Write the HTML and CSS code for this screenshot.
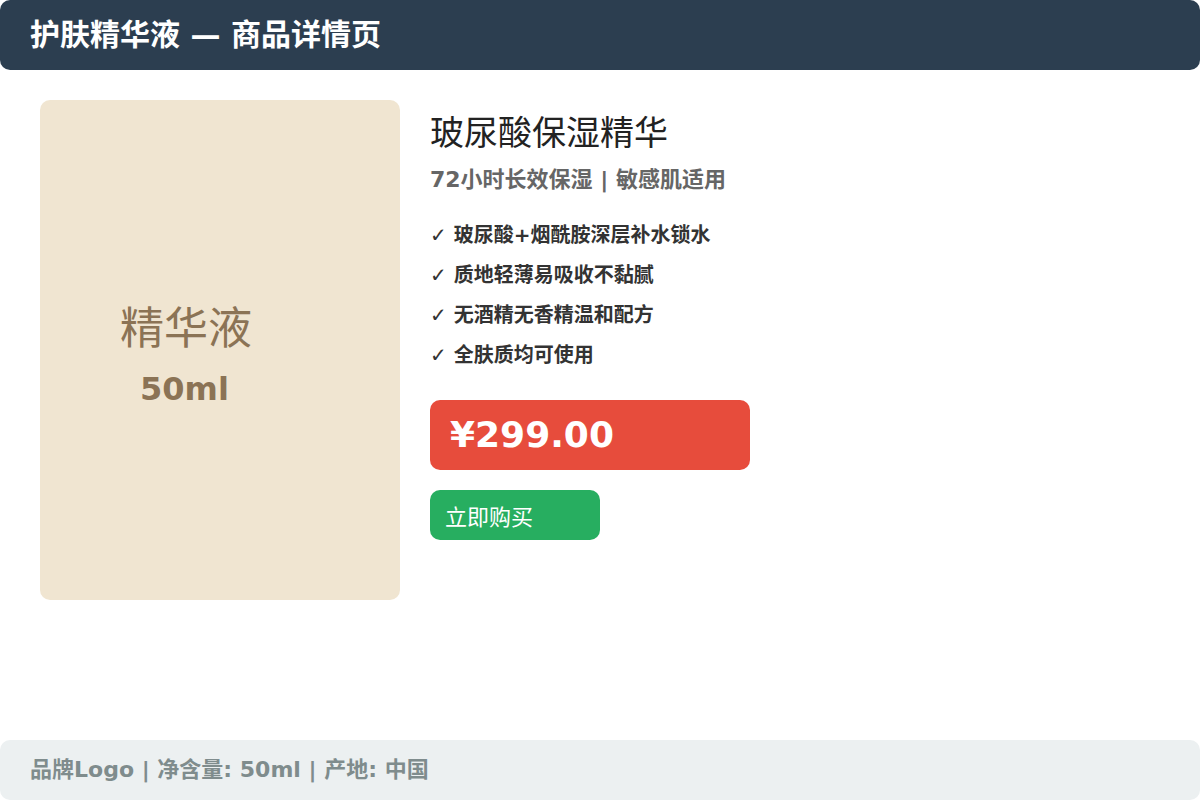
FILE: index.html
```html
<!DOCTYPE html>
<html lang="zh-CN">
<head>
  <meta charset="UTF-8">
  <title>护肤精华液 — 商品详情页</title>
  <link rel="stylesheet" href="styles.css">
</head>
<body>

  <div class="page">
    <div class="header">护肤精华液 — 商品详情页</div>

    <div class="main">
      <div class="product-image">
        <div class="image-label">精华液</div>
        <div class="image-size">50ml</div>
      </div>

      <div class="info">
        <h2>玻尿酸保湿精华</h2>
        <div class="subtitle">72小时长效保湿 | 敏感肌适用</div>
        <ul class="features">
          <li>✓ 玻尿酸+烟酰胺深层补水锁水</li>
          <li>✓ 质地轻薄易吸收不黏腻</li>
          <li>✓ 无酒精无香精温和配方</li>
          <li>✓ 全肤质均可使用</li>
        </ul>
        <div class="price">¥299.00</div>
        <button class="buy">立即购买</button>
      </div>
    </div>

    <div class="footer">品牌Logo | 净含量: 50ml | 产地: 中国</div>
  </div>

</body>
</html>
```

FILE: styles.css
```css
body {
  margin: 0;
  background: #fff;
  font-family: "DejaVu Sans", "Noto Sans CJK SC", sans-serif;
}
.page {
  height: 800px;
  display: flex;
  flex-direction: column;
}
.header {
  background: #2c3e50;
  color: white;
  height: 70px;
  line-height: 70px;
  padding-left: 30px;
  font-size: 30px;
  font-weight: bold;
  border-radius: 10px;
}
.main {
  flex: 1;
  display: flex;
  gap: 30px;
  padding: 30px 40px 0;
}
.product-image {
  width: 360px;
  height: 500px;
  background: #f0e5d1;
  border-radius: 10px;
  display: flex;
  flex-direction: column;
  justify-content: center;
  box-sizing: border-box;
  padding: 10px 0 0 80px;
  color: #8b7355;
}
.image-label {
  font-size: 44px;
  line-height: 56px;
}
.image-size {
  font-size: 32px;
  line-height: 40px;
  font-weight: bold;
  margin: 12px 0 0 20px;
}
.info {
  padding-top: 10px;
}
.info h2 {
  margin: 0;
  font-size: 34px;
  line-height: 46px;
  font-weight: normal;
  color: #222;
}
.subtitle {
  margin-top: 9px;
  font-size: 22px;
  line-height: 30px;
  font-weight: bold;
  color: #666;
}
.features {
  list-style: none;
  margin: 20px 0 0;
  padding: 0;
  font-size: 20px;
  font-weight: 600;
  color: #333;
}
.features li {
  line-height: 40px;
}
.price {
  margin-top: 25px;
  width: 320px;
  height: 70px;
  line-height: 70px;
  box-sizing: border-box;
  padding-left: 20px;
  background: #e74c3c;
  color: white;
  font-size: 36px;
  font-weight: bold;
  border-radius: 10px;
}
.buy {
  display: block;
  margin-top: 20px;
  width: 170px;
  height: 50px;
  padding: 0 0 0 15px;
  text-align: left;
  border: none;
  background: #27ae60;
  color: white;
  font-family: inherit;
  font-size: 22px;
  border-radius: 10px;
  cursor: pointer;
}
.footer {
  height: 60px;
  line-height: 60px;
  padding-left: 30px;
  background: #ecf0f1;
  color: #7f8c8d;
  font-size: 22px;
  font-weight: bold;
  border-radius: 10px;
}
```
